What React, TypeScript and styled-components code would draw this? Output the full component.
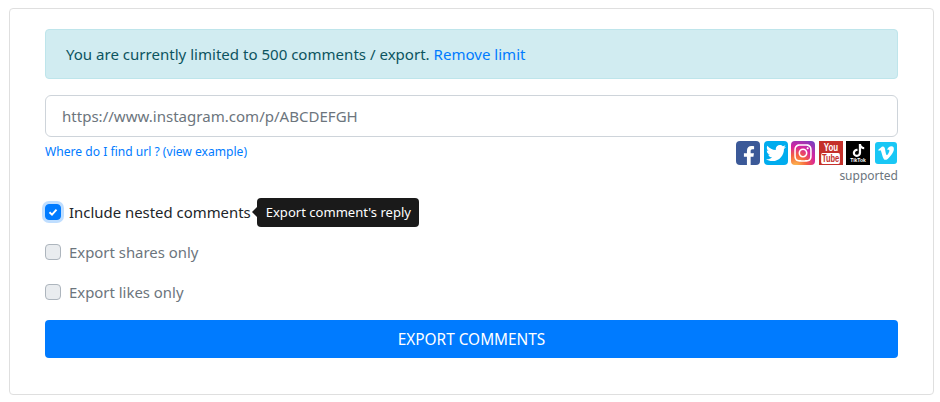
import React from "react";
import styled, { createGlobalStyle } from "styled-components";
import { FaFacebookF, FaTwitter, FaInstagram, FaTiktok, FaVimeoV } from "react-icons/fa";

const GlobalStyle = createGlobalStyle`
  html, body {
    margin: 0;
    background: #fff;
    font-family: "Noto Sans", "Open Sans", sans-serif;
    color: #212529;
  }
  * { box-sizing: border-box; }
`;

const Page = styled.div`
  width: 940px;
  height: 402px;
  padding: 8px 6px 7px 9px;
`;

const Card = styled.div`
  height: 387px;
  border: 1px solid #dfdfdf;
  border-radius: 4px;
  padding: 20px 35px 0;
`;

const Alert = styled.div`
  height: 50px;
  background: #d1ecf1;
  border: 1px solid #bee5eb;
  border-radius: 4px;
  color: #0c5460;
  font-size: 15.05px;
  line-height: 48px;
  padding-left: 20px;
  margin-bottom: 16px;

  a {
    color: #007bff;
    text-decoration: none;
  }
`;

const UrlInput = styled.input`
  display: block;
  width: 100%;
  height: 42px;
  border: 1px solid #ced4da;
  border-radius: 6px;
  padding: 0 16px;
  font-family: inherit;
  font-size: 15.05px;
  background: #fff;

  &::placeholder {
    color: #6c757d;
    opacity: 1;
  }
`;

const UrlHelp = styled.div`
  display: flex;
  justify-content: space-between;
  align-items: flex-start;
  margin-top: 4px;
  height: 59px;
`;

const HelpLink = styled.a`
  color: #007bff;
  font-size: 12.1px;
  line-height: 18px;
  margin-top: 2px;
  text-decoration: none;
`;

const Supported = styled.div`
  display: flex;
  flex-direction: column;
  align-items: flex-end;
`;

const IconRow = styled.div`
  display: flex;
  align-items: center;
  margin-right: 1px;
`;

const Logo = styled.span<{ $bg: string; $gap?: number }>`
  width: 24px;
  height: 24px;
  margin-right: ${(p) => p.$gap ?? 0}px;
  border-radius: 4px;
  background: ${(p) => p.$bg};
  color: #fff;
  display: flex;
  flex-direction: column;
  align-items: center;
  justify-content: center;
  overflow: hidden;
`;

const SquareLogo = styled(Logo)`
  border-radius: 0;
`;

const VimeoLogo = styled(Logo)`
  width: 22px;
  height: 22px;
  border-radius: 3px;
`;

const InstagramLogo = styled(Logo)`
  background: radial-gradient(circle at 20% 105%, #fdc04f 0%, #f56040 35%, #d6249f 62%, #7c3fc0 92%);
`;

const FacebookGlyph = styled(FaFacebookF)`
  margin: 5px 0 0 2px;
`;

const YouWord = styled.span`
  font-family: "Liberation Sans", sans-serif;
  font-size: 11px;
  font-weight: 700;
  line-height: 11px;
  transform: scaleX(0.72);
`;

const TubeWord = styled.span`
  font-family: "Liberation Sans", sans-serif;
  font-size: 10px;
  font-weight: 700;
  line-height: 11px;
  background: #fff;
  color: #c4302b;
  border-radius: 2px;
  padding: 0 1px;
  transform: scaleX(0.75);
`;

const TikTokWord = styled.span`
  font-family: "Liberation Sans", sans-serif;
  font-size: 5px;
  font-weight: 700;
  line-height: 6px;
  white-space: nowrap;
`;

const SupportedLabel = styled.span`
  font-size: 12px;
  line-height: 18px;
  color: #6c757d;
  margin-top: 2px;
`;

const CheckRow = styled.div<{ $muted?: boolean }>`
  display: flex;
  align-items: center;
  height: 24px;
  margin-bottom: 16px;
  font-size: 14.92px;
  color: ${(p) => (p.$muted ? "#6c757d" : "#212529")};
`;

const Box = styled.span<{ $checked?: boolean }>`
  width: 16px;
  height: 16px;
  border-radius: 4px;
  margin-right: 8px;
  display: flex;
  align-items: center;
  justify-content: center;
  background: ${(p) => (p.$checked ? "#007bff" : "#e9ecef")};
  border: 1px solid ${(p) => (p.$checked ? "#007bff" : "#adb5bd")};
  box-shadow: ${(p) => (p.$checked ? "0 0 0 3px rgba(0, 123, 255, 0.25)" : "none")};
`;

const Tip = styled.span`
  position: relative;
  margin-left: 6px;
  height: 29px;
  line-height: 29px;
  padding: 0 8px 0 9px;
  background: #1a1a1a;
  color: #fff;
  font-size: 13.05px;
  border-radius: 4px;

  &::before {
    content: "";
    position: absolute;
    left: -5px;
    top: 9px;
    border-style: solid;
    border-width: 5px 5px 5px 0;
    border-color: transparent #1a1a1a transparent transparent;
  }
`;

const ExportButton = styled.button`
  display: block;
  width: 100%;
  height: 38px;
  border: 0;
  border-radius: 4px;
  background: #007bff;
  color: #fff;
  font-family: inherit;
  font-size: 15.4px;
`;

export default function App() {
  return (
    <Page>
      <GlobalStyle />
      <Card>
        <Alert>
          You are currently limited to 500 comments / export. <a href="#limit">Remove limit</a>
        </Alert>
        <UrlInput placeholder="https://www.instagram.com/p/ABCDEFGH" />
        <UrlHelp>
          <HelpLink href="#example">Where do I find url ? (view example)</HelpLink>
          <Supported>
            <IconRow>
              <Logo $bg="#3b5998" $gap={4}>
                <FacebookGlyph size={20} />
              </Logo>
              <Logo $bg="#00acee" $gap={3}>
                <FaTwitter size={20} />
              </Logo>
              <InstagramLogo $bg="#d6249f" $gap={4}>
                <FaInstagram size={20} />
              </InstagramLogo>
              <SquareLogo $bg="#c4302b" $gap={3}>
                <YouWord>You</YouWord>
                <TubeWord>Tube</TubeWord>
              </SquareLogo>
              <SquareLogo $bg="#000" $gap={5}>
                <FaTiktok size={13} />
                <TikTokWord>TikTok</TikTokWord>
              </SquareLogo>
              <VimeoLogo $bg="#19c7f5">
                <FaVimeoV size={18} />
              </VimeoLogo>
            </IconRow>
            <SupportedLabel>supported</SupportedLabel>
          </Supported>
        </UrlHelp>
        <CheckRow>
          <Box $checked>
            <svg width="10" height="10" viewBox="0 0 10 10">
              <path d="M1.5 5.2 4 7.6 8.5 2.6" fill="none" stroke="#fff" strokeWidth="1.9" />
            </svg>
          </Box>
          Include nested comments
          <Tip>Export comment's reply</Tip>
        </CheckRow>
        <CheckRow $muted>
          <Box />
          Export shares only
        </CheckRow>
        <CheckRow $muted>
          <Box />
          Export likes only
        </CheckRow>
        <ExportButton>EXPORT COMMENTS</ExportButton>
      </Card>
    </Page>
  );
}
